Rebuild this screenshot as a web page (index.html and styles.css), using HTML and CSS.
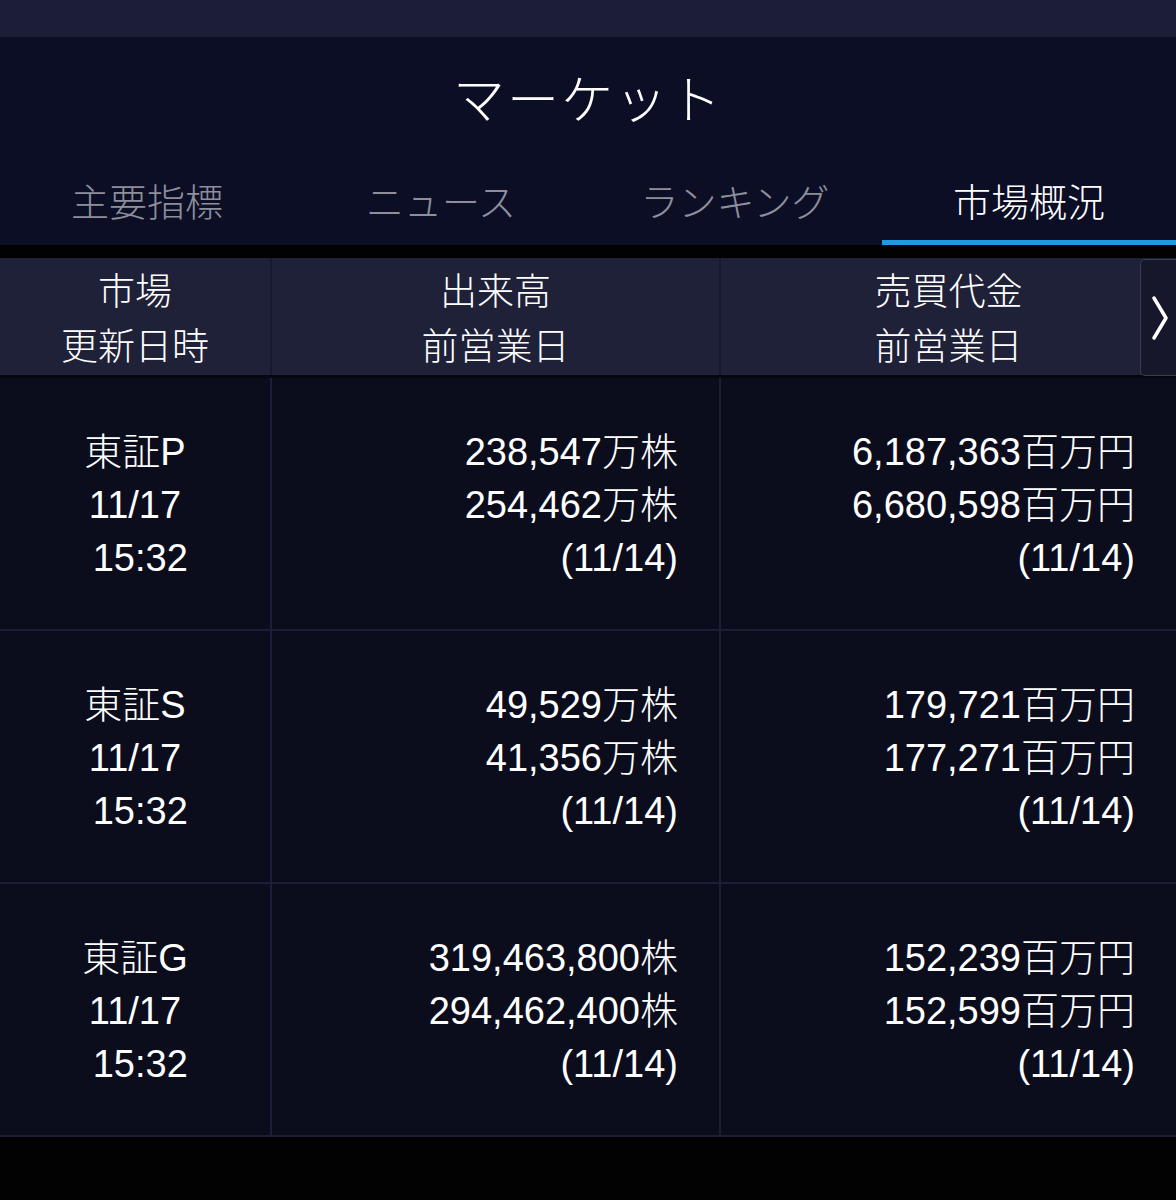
FILE: index.html
```html
<!DOCTYPE html>
<html lang="ja">

<head>
    <meta charset="UTF-8">
    <meta name="viewport" content="width=device-width, initial-scale=1.0">
    <title>マーケット</title>
    <link rel="stylesheet" href="styles.css">
</head>

<body>
    <div class="status-strip"></div>

    <header class="market-header">
        <h1 class="title">マーケット</h1>
        <nav class="tabs">
            <div class="tab">主要指標</div>
            <div class="tab">ニュース</div>
            <div class="tab">ランキング</div>
            <div class="tab active">市場概況</div>
        </nav>
    </header>

    <div class="table">
        <div class="table-head">
            <div class="cell head-cell">市場<br>更新日時</div>
            <div class="cell head-cell">出来高<br>前営業日</div>
            <div class="cell head-cell">売買代金<br>前営業日</div>
            <button class="next-btn" aria-label="次へ">
                <svg width="20" height="48" viewBox="0 0 20 48">
                    <path d="M4 4 L16 24 L4 44" fill="none" stroke="#fff" stroke-width="3.5" stroke-linecap="round" stroke-linejoin="round" />
                </svg>
            </button>
        </div>

        <div class="row">
            <div class="cell market">東証P<br>11/17<br>&nbsp;15:32</div>
            <div class="cell num">238,547万株<br>254,462万株<br>(11/14)</div>
            <div class="cell num">6,187,363百万円<br>6,680,598百万円<br>(11/14)</div>
        </div>
        <div class="row">
            <div class="cell market">東証S<br>11/17<br>&nbsp;15:32</div>
            <div class="cell num">49,529万株<br>41,356万株<br>(11/14)</div>
            <div class="cell num">179,721百万円<br>177,271百万円<br>(11/14)</div>
        </div>
        <div class="row">
            <div class="cell market">東証G<br>11/17<br>&nbsp;15:32</div>
            <div class="cell num">319,463,800株<br>294,462,400株<br>(11/14)</div>
            <div class="cell num">152,239百万円<br>152,599百万円<br>(11/14)</div>
        </div>
    </div>
</body>

</html>
```

FILE: styles.css
```css
:root {
    --strip-bg: #1b1e36;
    --header-bg: #0c0e26;
    --head-row-bg: #1f2139;
    --row-bg: #0b0d1d;
    --line-color: #1c1d38;
    --tab-muted: #8d8f9b;
    --accent: #1e9be0;
    --text-color: #ffffff;
}

body {
    margin: 0;
    background-color: #020203;
    color: var(--text-color);
    font-family: "Liberation Sans", "Noto Sans CJK JP", sans-serif;
}

.status-strip {
    height: 37px;
    background-color: var(--strip-bg);
}

.market-header {
    background-color: var(--header-bg);
}

.title {
    margin: 0;
    height: 125px;
    display: flex;
    align-items: center;
    justify-content: center;
    font-family: "Noto Sans CJK JP", sans-serif;
    font-size: 52px;
    font-weight: 300;
    letter-spacing: 2px;
    padding-bottom: 6px;
    box-sizing: border-box;
}

.tabs {
    display: grid;
    grid-template-columns: repeat(4, 1fr);
}

.tab {
    height: 83px;
    display: flex;
    align-items: center;
    justify-content: center;
    font-family: "Noto Sans CJK JP", sans-serif;
    font-size: 38px;
    font-weight: 300;
    color: var(--tab-muted);
    border-bottom: 5px solid transparent;
    box-sizing: border-box;
    padding-bottom: 4px;
}

.tab.active {
    color: var(--text-color);
    border-bottom-color: var(--accent);
}

.table {
    margin-top: 13px;
}

.table-head,
.row {
    display: grid;
    grid-template-columns: 270px 447px 1fr;
    column-gap: 2px;
    background-color: var(--line-color);
}

.table-head {
    position: relative;
    height: 117px;
    border-bottom: 3px solid #07080f;
    background-color: #17192e;
}

.row {
    height: 251px;
    border-bottom: 2px solid var(--line-color);
}

.cell {
    display: flex;
    flex-direction: column;
    justify-content: center;
    font-size: 38px;
    font-weight: 300;
    line-height: 53px;
}

.head-cell {
    background-color: var(--head-row-bg);
    text-align: center;
    align-items: center;
    font-family: "Noto Sans CJK JP", sans-serif;
    font-size: 37px;
    line-height: 55px;
}

.row .cell {
    background-color: var(--row-bg);
    padding-top: 3px;
}

.market {
    text-align: center;
    white-space: pre;
}

.num {
    text-align: right;
    padding-right: 41px;
}

.next-btn {
    position: absolute;
    top: 1px;
    right: 0;
    width: 36px;
    height: 117px;
    padding: 0 0 0 2px;
    display: flex;
    align-items: center;
    justify-content: center;
    background-color: #16172a;
    border: 1px solid #3a3c52;
    border-right: none;
    border-radius: 5px 0 0 5px;
}
```
